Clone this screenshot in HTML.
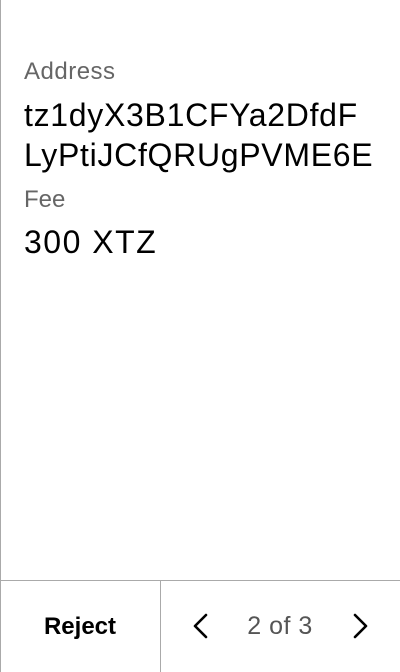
<!DOCTYPE html>
<html><head><style>
html,body{margin:0;padding:0;background:#fff;}
body{width:400px;height:672px;position:relative;overflow:hidden;font-family:"Liberation Sans",sans-serif;}
.lb{position:absolute;left:0;top:0;width:1px;height:672px;background:#aaa;}
.t{position:absolute;left:24px;white-space:nowrap;}
.lab{font-size:24px;color:#666;line-height:28px;}
.val{font-size:32px;color:#000;line-height:40px;letter-spacing:0.7px;}
.hr{position:absolute;left:0;top:580px;width:400px;height:1px;background:#aaa;}
.vr{position:absolute;left:160px;top:580px;width:1px;height:92px;background:#aaa;}
</style></head><body>
<div class="lb"></div>
<div class="t lab" style="top:58px;letter-spacing:0.5px">Address</div>
<div class="t val" style="top:95px">tz1dyX3B1CFYa2DfdF<br>LyPtiJCfQRUgPVME6E</div>
<div class="t lab" style="top:186px">Fee</div>
<div class="t val" style="top:222px;letter-spacing:1.5px">300 XTZ</div>
<div class="hr"></div><div class="vr"></div>
<div style="position:absolute;left:0;width:160px;top:613px;text-align:center;font-size:24px;font-weight:bold;color:#000">Reject</div>
<div style="position:absolute;left:200px;width:160px;top:612px;text-align:center;font-size:25px;color:#555;letter-spacing:0.5px">2 of 3</div>
<svg style="position:absolute;left:0;top:0" width="400" height="672"><g fill="none" stroke="#000" stroke-width="2.6" stroke-linecap="round" stroke-linejoin="round"><path d="M206 615 L195 626 L206 637"/><path d="M355 615 L366 626 L355 637"/></g></svg>
</body></html>
